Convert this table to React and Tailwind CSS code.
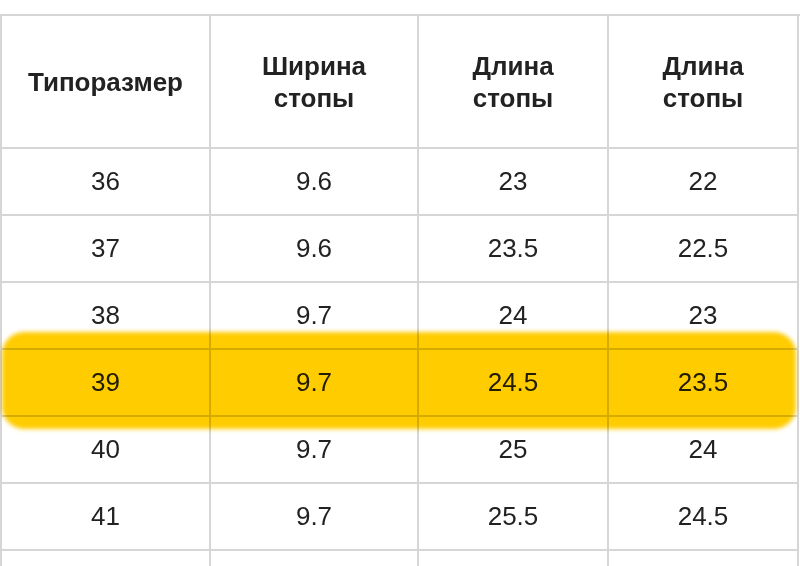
import React from "react";

const headers = [
  ["Типоразмер"],
  ["Ширина", "стопы"],
  ["Длина", "стопы"],
  ["Длина", "стопы"],
];

const rows = [
  ["36", "9.6", "23", "22"],
  ["37", "9.6", "23.5", "22.5"],
  ["38", "9.7", "24", "23"],
  ["39", "9.7", "24.5", "23.5"],
  ["40", "9.7", "25", "24"],
  ["41", "9.7", "25.5", "24.5"],
  ["", "", "", ""],
];

export default function App() {
  return (
    <div
      className="relative w-[800px] h-[566px] overflow-hidden bg-white pt-[14px] text-[#222222]"
      style={{ fontFamily: '"Liberation Sans", Arial, Helvetica, sans-serif' }}
    >
      <div className="grid grid-cols-[211px_208px_190px_190px] border-t-2 border-[#d6d6d6]">
        {/* ── Header ── */}
        {headers.map((h, i) => (
          <div
            key={"h" + i}
            className={`h-[133px] flex flex-col items-center justify-center border-b-2 border-r-2 border-[#d6d6d6] text-[26px] leading-[32px] font-bold ${
              i === 0 ? "border-l-2" : ""
            }`}
          >
            {h.map((line) => (
              <span key={line}>{line}</span>
            ))}
          </div>
        ))}

        {/* ── Body ── */}
        {rows.map((r, ri) =>
          r.map((c, ci) => (
            <div
              key={ri + "-" + ci}
              className={`h-[67px] flex items-center justify-center border-b-2 border-r-2 border-[#d6d6d6] text-[26px] ${
                ci === 0 ? "border-l-2" : ""
              }`}
            >
              {c}
            </div>
          ))
        )}
      </div>

      {/* marker highlight over row 39 */}
      <div className="absolute left-[2px] top-[332px] w-[794px] h-[97px] rounded-[22px] bg-[#ffcc00] mix-blend-multiply blur-[2px]" />
    </div>
  );
}
